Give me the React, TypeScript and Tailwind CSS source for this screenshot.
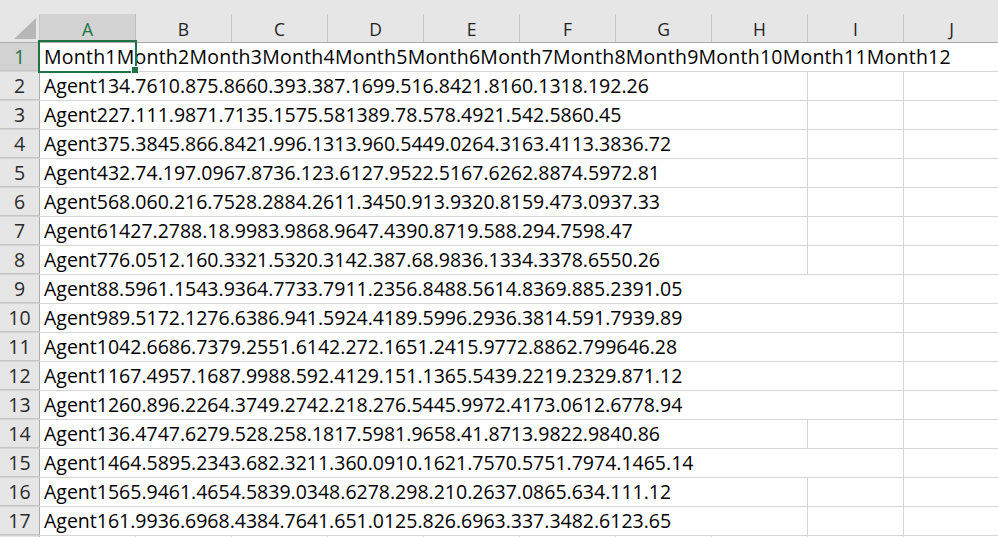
import React from "react";

const COLS = ["A", "B", "C", "D", "E", "F", "G", "H", "I", "J"];

type Row = { text: string; lines: number[] };

const ROWS: Row[] = [
  { text: "Month1Month2Month3Month4Month5Month6Month7Month8Month9Month10Month11Month12", lines: [] },
  { text: "Agent134.7610.875.8660.393.387.1699.516.8421.8160.1318.192.26", lines: [7, 8, 9] },
  { text: "Agent227.111.9871.7135.1575.581389.78.578.4921.542.5860.45", lines: [7, 8, 9] },
  { text: "Agent375.3845.866.8421.996.1313.960.5449.0264.3163.4113.3836.72", lines: [7, 8, 9] },
  { text: "Agent432.74.197.0967.8736.123.6127.9522.5167.6262.8874.5972.81", lines: [7, 8, 9] },
  { text: "Agent568.060.216.7528.2884.2611.3450.913.9320.8159.473.0937.33", lines: [7, 8, 9] },
  { text: "Agent61427.2788.18.9983.9868.9647.4390.8719.588.294.7598.47", lines: [7, 8, 9] },
  { text: "Agent776.0512.160.3321.5320.3142.387.68.9836.1334.3378.6550.26", lines: [7, 8, 9] },
  { text: "Agent88.5961.1543.9364.7733.7911.2356.8488.5614.8369.885.2391.05", lines: [8, 9] },
  { text: "Agent989.5172.1276.6386.941.5924.4189.5996.2936.3814.591.7939.89", lines: [8, 9] },
  { text: "Agent1042.6686.7379.2551.6142.272.1651.2415.9772.8862.799646.28", lines: [8, 9] },
  { text: "Agent1167.4957.1687.9988.592.4129.151.1365.5439.2219.2329.871.12", lines: [8, 9] },
  { text: "Agent1260.896.2264.3749.2742.218.276.5445.9972.4173.0612.6778.94", lines: [8, 9] },
  { text: "Agent136.4747.6279.528.258.1817.5981.9658.41.8713.9822.9840.86", lines: [7, 8, 9] },
  { text: "Agent1464.5895.2343.682.3211.360.0910.1621.7570.5751.7974.1465.14", lines: [8, 9] },
  { text: "Agent1565.9461.4654.5839.0348.6278.298.210.2637.0865.634.111.12", lines: [7, 8, 9] },
  { text: "Agent161.9936.6968.4384.7641.651.0125.826.6963.337.3482.6123.65", lines: [7, 8, 9] },
  { text: "", lines: [0, 1, 2, 3, 4, 5, 6, 7, 8, 9] },
];

export default function App() {
  return (
    <div
      className="relative w-[998px] h-[537px] overflow-hidden bg-white"
      style={{ fontFamily: '"Open Sans", "Noto Sans", sans-serif' }}
    >
      <div className="w-[1000px] flex flex-col">
        {/* top band */}
        <div className="h-[14px] bg-[#e6e6e6]" />
        {/* column header */}
        <div className="flex h-[29px] bg-[#e6e6e6] border-b border-[#ababab]">
          <div className="w-[40px] h-full flex items-end justify-end pr-[3px] pb-[3px] border-r border-[#c6c6c6]">
            <svg width="22" height="21" viewBox="0 0 22 21">
              <polygon points="0,21 22,21 22,0" fill="#b7b7b7" />
            </svg>
          </div>
          {COLS.map((c, i) => (
            <div
              key={c}
              className={
                i === 0
                  ? "w-[96px] h-full flex items-center justify-center pt-[3px] text-[17.5px] leading-none text-[#217346] bg-[#d2d2d2] border-r border-[#bdbdbd]"
                  : "w-[96px] h-full flex items-center justify-center pt-[3px] text-[17.5px] leading-none text-[#1f1f1f] border-r border-[#c6c6c6]"
              }
            >
              {c}
            </div>
          ))}
        </div>
        {/* rows */}
        {ROWS.map((r, ri) => (
          <div key={ri} className="flex h-[29px] border-b border-[#d4d4d4]">
            <div
              className={
                ri === 0
                  ? "w-[40px] h-full flex items-center justify-center text-[19.5px] leading-none text-[#217346] bg-[#d2d2d2] border-r border-[#ababab] -mb-px border-b border-b-[#c6c6c6] h-[29px]"
                  : "w-[40px] h-full flex items-center justify-center text-[19.5px] leading-none text-[#2b2b2b] bg-[#e6e6e6] border-r border-[#ababab] -mb-px border-b border-b-[#c6c6c6] h-[29px]"
              }
            >
              {r.text ? ri + 1 : null}
            </div>
            {COLS.map((c, ci) => (
              <div
                key={c}
                className={
                  r.lines.includes(ci)
                    ? "w-[96px] h-full border-r border-[#d4d4d4]"
                    : "w-[96px] h-full border-r border-transparent"
                }
              >
                {ci === 0 && r.text ? (
                  <div
                    className={
                      ri === 0
                        ? "h-full flex items-center pl-[4px] whitespace-nowrap text-[19.5px] leading-none text-black tracking-[0.24px]"
                        : "h-full flex items-center pl-[4px] whitespace-nowrap text-[19.5px] leading-none text-black"
                    }
                  >
                    {r.text}
                  </div>
                ) : null}
              </div>
            ))}
          </div>
        ))}
      </div>
      {/* selection box for A1 */}
      <div className="absolute left-[38px] top-[40px] w-[99px] h-[33px] border-2 border-[#217346]" />
      <div className="absolute left-[131px] top-[66px] w-[8px] h-[8px] bg-[#217346] border border-white" />
    </div>
  );
}
